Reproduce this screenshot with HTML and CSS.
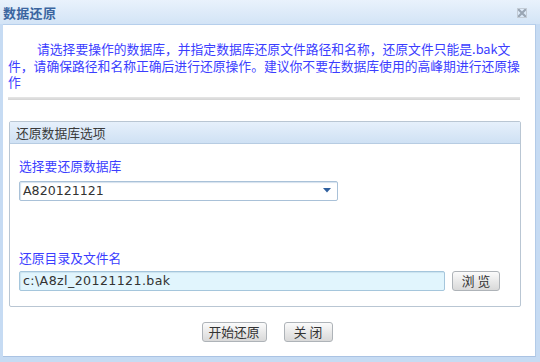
FILE: index.html
```html
<!DOCTYPE html>
<html lang="zh-CN">
<head>
<meta charset="utf-8">
<title>数据还原</title>
<link rel="stylesheet" href="styles.css">
</head>
<body>
<div class="dialog">
  <div class="titlebar">
    <span class="title">数据还原</span>
    <svg class="close" width="10" height="10" viewBox="0 0 10 10"><path d="M1.5 1.5 L8.5 8.5 M8.5 1.5 L1.5 8.5" stroke="#9aa6b4" stroke-width="2.2" stroke-linecap="square"/><rect x="0.5" y="0.5" width="9" height="9" fill="none" stroke="#c3ccd6" stroke-width="1"/></svg>
  </div>
  <div class="content">
    <p class="intro">请选择要操作的数据库，并指定数据库还原文件路径和名称，还原文件只能是.bak文件，请确保路径和名称正确后进行还原操作。建议你不要在数据库使用的高峰期进行还原操作</p>
    <div class="divider"></div>
    <div class="panel">
      <div class="panel-head">还原数据库选项</div>
      <div class="panel-body">
        <div class="label first">选择要还原数据库</div>
        <div class="select">
          <span class="select-text">A820121121</span>
          <svg class="arrow" width="8" height="5" viewBox="0 0 8 5"><path d="M0 0 H8 L4 4.5 Z" fill="#2f5f9e"/></svg>
        </div>
        <div class="label second">还原目录及文件名</div>
        <div class="file-row">
          <div class="input">c:\A8zl_20121121.bak</div>
          <button class="btn browse">浏 览</button>
        </div>
      </div>
    </div>
    <div class="actions">
      <button class="btn start">开始还原</button>
      <button class="btn close-btn">关 闭</button>
    </div>
  </div>
</div>
</body>
</html>
```
FILE: styles.css
```css
html, body {
  margin: 0;
  padding: 0;
}
body {
  width: 540px;
  height: 362px;
  overflow: hidden;
  font-family: "Noto Sans CJK SC", "Noto Sans", sans-serif;
  background: #c9ddf4;
}
.dialog {
  width: 540px;
  height: 362px;
  display: flex;
  flex-direction: column;
  background: #c6dbf3;
}
.titlebar {
  height: 24px;
  flex: none;
  display: flex;
  align-items: center;
  justify-content: space-between;
  padding: 0 13px 0 3px;
  background: linear-gradient(#e9f2fc, #d3e4f6);
  box-sizing: border-box;
}
.title {
  font-size: 13px;
  font-weight: bold;
  color: #3a65a0;
  letter-spacing: 0.3px;
}
.close {
  display: block;
  margin-top: 2px;
}
.content {
  flex: 1;
  margin: 0 4px 5px 3px;
  background: #fff;
  border-top: 1px solid #b6cfec;
  border-right: 1px solid #b3cbe8;
  border-bottom: 1px solid #aac3e3;
  padding: 16px 0 0 5px;
  box-sizing: border-box;
}
.intro {
  margin: 0;
  width: 513px;
  font-size: 12.8px;
  line-height: 16.5px;
  text-indent: 29px;
  color: #3b3dff;
}
.divider {
  width: 512px;
  height: 3px;
  margin-top: 6px;
  background: linear-gradient(#e6e6e6, #d4d4d4);
}
.panel {
  width: 512px;
  margin: 21px 0 0 1px;
  border: 1px solid #b9c6d3;
  border-radius: 2px;
  box-sizing: border-box;
}
.panel-head {
  height: 21px;
  line-height: 21px;
  padding-left: 6px;
  font-size: 12.8px;
  color: #3a3a3a;
  background: linear-gradient(#e6f0fb, #cfe1f4);
  border-bottom: 1px solid #b7cce2;
}
.panel-body {
  padding: 14px 0 15px 9px;
}
.label {
  font-size: 12.8px;
  line-height: 16px;
  color: #3b3dff;
}
.label.first {
  margin-bottom: 7px;
}
.label.second {
  margin-top: 49px;
  margin-bottom: 5px;
}
.select {
  width: 319px;
  height: 20px;
  box-sizing: border-box;
  border: 1px solid #a9c1d8;
  border-radius: 2px;
  box-shadow: inset 1px 1px 1px #d5e2ee;
  display: flex;
  align-items: center;
  justify-content: space-between;
  padding: 0 6px 0 3px;
  background: #fff;
}
.select-text, .input {
  font-family: "DejaVu Sans", "Noto Sans", sans-serif;
  font-size: 12.6px;
  color: #333;
}
.input {
  letter-spacing: 0.4px;
}
.arrow {
  display: block;
}
.file-row {
  display: flex;
  align-items: center;
  gap: 7px;
}
.input {
  width: 426px;
  height: 20px;
  box-sizing: border-box;
  border: 1px solid #a5c6dc;
  border-radius: 2px;
  background: #e1f5fd;
  box-shadow: inset 1px 1px 1px #cbe3ef;
  padding-left: 3px;
  line-height: 18px;
}
.btn {
  height: 20px;
  box-sizing: border-box;
  padding: 0;
  border: 1px solid #aeb3b8;
  border-radius: 3px;
  background: linear-gradient(#fbfbfb, #e6e6e6 60%, #d9d9d9);
  font-family: "Noto Sans CJK SC", sans-serif;
  font-size: 12.8px;
  line-height: 18px;
  color: #333;
}
.browse {
  width: 48px;
}
.actions {
  display: flex;
  justify-content: center;
  gap: 17px;
  margin-top: 15px;
  padding-right: 9px;
}
.start {
  width: 65px;
}
.close-btn {
  width: 49px;
}
```
